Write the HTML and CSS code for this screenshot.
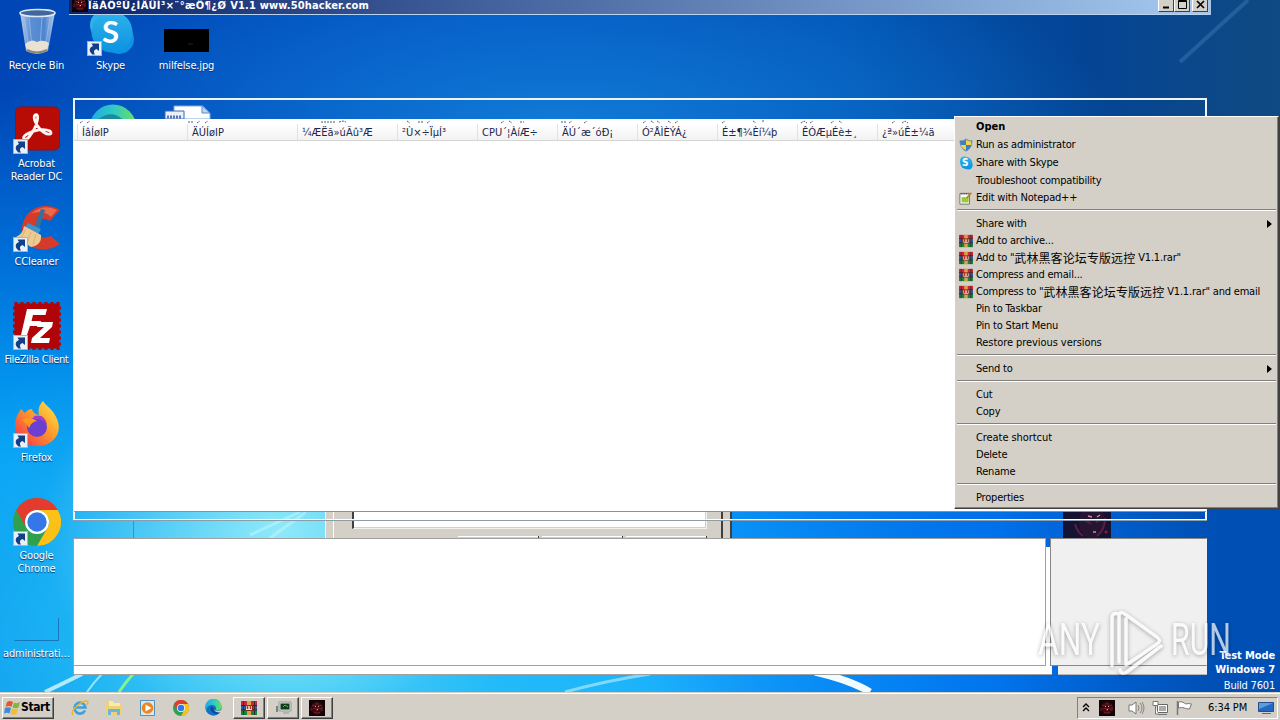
FILE: index.html
```
<!DOCTYPE html>
<html lang="en">
<head>
<meta charset="utf-8">
<title>Desktop</title>
<link rel="stylesheet" href="styles.css">
</head>
<body>
<svg class="defs" width="0" height="0">
  <defs>
    <linearGradient id="fire" x1="1" y1="0" x2="0" y2="1"><stop offset="0" stop-color="#fff04a"/><stop offset=".45" stop-color="#ff9a2a"/><stop offset="1" stop-color="#f5264f"/></linearGradient>
    <linearGradient id="sky" x1="0" y1="0" x2="0" y2="1"><stop offset="0" stop-color="#2fb2ea"/><stop offset="1" stop-color="#0c93e2"/></linearGradient>
    <linearGradient id="edg" x1="0" y1="0" x2="1" y2="0"><stop offset="0" stop-color="#20a8e0"/><stop offset=".5" stop-color="#2fc8c8"/><stop offset="1" stop-color="#6be05a"/></linearGradient>
    <linearGradient id="bin" x1="0" y1="0" x2="1" y2="0"><stop offset="0" stop-color="#b9cfe8"/><stop offset=".3" stop-color="#5c8fd4"/><stop offset=".7" stop-color="#4f86d0"/><stop offset="1" stop-color="#b5cdea"/></linearGradient>
    <symbol id="shortcut" viewBox="0 0 15 15"><rect x=".5" y=".5" width="14" height="14" fill="#e9f1f8" stroke="#a8b4c0"/><path d="M5.500 13.500C1.500 10.500 2 6.500 6 5L4.500 2.500H12V10L9.500 8C6.500 9 6.500 11 8 13.500Z" fill="#123f86"/></symbol>
    <symbol id="rar" viewBox="0 0 16 16"><path fill="#cf2438" d="M0 1h16v5H0z"/><path fill="#2d5dab" d="M0 6h16v4H0z"/><path fill="#16833e" d="M0 10h16v5H0z"/><path d="M0 5.500h16M0 10h16" stroke="#2b1c24"/><path fill="#d6a443" d="M6 1h4v14H6z"/><path d="M2.500 1v14M13.500 1v14" stroke="#3a2b34"/><path fill="#e9e2cf" stroke="#7a2a20" d="M4.500 5.500h7v5h-7z"/><path d="M6.500 5v4M9.500 5v4" stroke="#c22a20" stroke-width="1.500"/></symbol>
    <symbol id="chrome" viewBox="0 0 48 48"><circle cx="24" cy="24" r="24" fill="#2fa14e"/><path d="M3.200 12A24 24 0 0 1 44.800 12H24A12 12 0 0 0 13.600 30Z" fill="#e33b2e"/><path d="M44.800 12A24 24 0 0 1 24 48L34.400 30A12 12 0 0 0 24 12Z" fill="#fbc116"/><circle cx="24" cy="24" r="12" fill="#fff"/><circle cx="24" cy="24" r="9.700" fill="#3477e8"/></symbol>
    <symbol id="edge" viewBox="0 0 48 48"><circle cx="24" cy="24" r="23" fill="#1271c5"/><path d="M1 22A23 23 0 0 1 47 22C47 32 36 35 30 31 34 26 30 17 20 17 11 17 3 24 4 34A23 23 0 0 1 1 22Z" fill="url(#edg)"/><path d="M18 20C12 28 18 41 31 42 37 42 42 38 44 35 37 39 26 36 27 29Z" fill="#0b4a96"/><path d="M27 29Q28 37 47 31L48 36Q37 41 27 34Z" fill="#d4d0c8"/></symbol>
    <symbol id="skull" viewBox="0 0 16 16"><rect width="16" height="16" fill="#100406"/><ellipse cx="8" cy="8" rx="6" ry="6.500" fill="#350b12"/><path d="M3 5l3 1 2-3 2 3 3-1M4 9l3-1 1 3 1-3 3 1M5 12l2 1h3l1-1M2 8v3M13 7v4" fill="none" stroke="#96202a" stroke-width=".8"/><path d="M6 6h1v1H6zM9 6h1v1H9zM8 9h1v1H8z" fill="#d6a4a4"/></symbol>
    <symbol id="skype" viewBox="0 0 48 48"><circle cx="18" cy="17" r="15" fill="#2fb2ea"/><circle cx="32" cy="31" r="15" fill="#0d94e2"/><circle cx="25" cy="24" r="20.500" fill="url(#sky)"/></symbol>
  </defs>
</svg>

<main class="desktop">
  <svg class="wallpaper" width="1280" height="692" viewBox="0 0 1280 692" fill="none">
    <path d="M1180 62L1248 0" stroke="#5f9bd0" stroke-opacity=".28" stroke-width="4"/>
    <path d="M45 692Q62 684 82 674" stroke="#d9f8ff" stroke-width="4" stroke-opacity=".8"/>
    <path d="M87 692Q94 682 102 674" stroke="#c2f2ff" stroke-width="2" stroke-opacity=".75"/>
    <path d="M119 692Q125 683 133 674" stroke="#8cf08a" stroke-width="3"/>
    <path d="M565 692Q605 681 650 674" stroke="#a6eaff" stroke-width="3" stroke-opacity=".7"/>
    <path d="M815 672Q850 680 870 692" stroke="#f2fcff" stroke-width="7"/>
    <path d="M250 535L300 512M270 538L306 512" stroke="#d8fbff" stroke-opacity=".4" stroke-width="3"/>
  </svg>

  <div class="shortcut bin">
    <svg width="48" height="48" viewBox="0 0 48 48"><path d="M7 4L13 43Q24 49 35 43L42 4Z" fill="url(#bin)"/><path d="M11 10L16 40M37 10L32 40M16 8L19 40M29 9L27 38" stroke="#a9c7ec" stroke-opacity=".6"/><path d="M12 36Q18 30 24 34 30 31 36 35L34 43Q24 48 14 43Z" fill="#e9e2d4"/><path d="M14 42Q24 47 34 42" stroke="#8d8576" stroke-width="2" fill="none"/><ellipse cx="24.500" cy="5" rx="17.500" ry="3.500" fill="#41659c" stroke="#dfe8f2" stroke-width="1.600"/></svg>
    <span>Recycle Bin</span>
  </div>
  <div class="shortcut skype">
    <div class="pic"><svg width="48" height="48"><use href="#skype"/></svg><b class="skype-s">S</b><svg class="arrow"><use href="#shortcut"/></svg></div>
    <span>Skype</span>
  </div>
  <div class="shortcut milf">
    <svg width="48" height="48"><rect x="1" y="21" width="45" height="23" fill="#000"/><path d="M25 36h5" stroke="#242424"/></svg>
    <span>milfelse.jpg</span>
  </div>
  <div class="shortcut acrobat">
    <div class="pic"><svg width="48" height="48" viewBox="0 0 48 48"><rect x="2.500" y="1" width="44" height="43" rx="5" fill="#b70b06" stroke="#921111"/><path d="M22 9C27 6 25 20 16 31 12 36 7 32 14 28 21 24 31 22 37 25 41 29 33 30 27 23 22 18 20 11 22 9Z" fill="none" stroke="#fff4ee" stroke-width="2.800"/></svg><svg class="arrow"><use href="#shortcut"/></svg></div>
    <span>Acrobat<br>Reader DC</span>
  </div>
  <div class="shortcut ccleaner">
    <div class="pic"><svg width="48" height="48" viewBox="0 0 48 48"><path d="M47 6L37 17Q24 10 22 24 23 37 38 32L47 40C34 50 9 47 9 24 12 1 35-2 47 6Z" fill="#d53b2b"/><path d="M44 6Q30-1 18 10 29 5 38 13Z" fill="#ec6a4c"/><path d="M28 5L32 6 26 25 21 23Z" fill="#34719f"/><path d="M15 19L28 25 25 30 12 23Z" fill="#3e93cd"/><path d="M11 22L28 31Q29 41 18 43L3 33Q10 30 11 22Z" fill="#edca91"/><path d="M13 25L8 34M18 28L14 40M23 30L20 41" stroke="#c69a5c" stroke-opacity=".5"/></svg><svg class="arrow"><use href="#shortcut"/></svg></div>
    <span>CCleaner</span>
  </div>
  <div class="shortcut filezilla">
    <div class="pic"><svg width="48" height="48" viewBox="0 0 48 48"><rect x="1.500" y="1.500" width="45" height="45" fill="#b00408" stroke="#b00408" stroke-width="3" stroke-dasharray="3 3"/><path d="M14 7H34L32.500 13H20L18.500 19H28L27 24H17L14 33H8Z" fill="#fff"/><path d="M25 20H40L39 25 27 36H37L36 41H18L19 36 31 25H24Z" fill="#fff"/></svg><svg class="arrow"><use href="#shortcut"/></svg></div>
    <span>FileZilla Client</span>
  </div>
  <div class="shortcut firefox">
    <div class="pic"><svg width="48" height="48" viewBox="0 0 48 48"><path d="M30 1C33 6 38 8 42 15 53 33 38 47 24 46 8 46-1 32 3 19 4 14 7 11 8 9L12 13Q15 9 19 9 20 14 26 15 24 7 30 1Z" fill="url(#fire)"/><circle cx="24" cy="27" r="10" fill="#6b3fd0"/><path d="M8 20Q18 16 24 21 18 22 16 28 12 21 8 20Z" fill="#ff981f"/><path d="M21 16Q32 13 34 25 30 18 21 19Z" fill="#a63bc4"/></svg><svg class="arrow"><use href="#shortcut"/></svg></div>
    <span>Firefox</span>
  </div>
  <div class="shortcut gchrome">
    <div class="pic"><svg width="48" height="48"><use href="#chrome"/></svg><svg class="arrow"><use href="#shortcut"/></svg></div>
    <span>Google<br>Chrome</span>
  </div>
  <div class="shortcut admin">
    <svg width="48" height="48"><path d="M1.500 44.500H45.500V22" fill="none" stroke="#1578bd"/></svg>
    <span>administrati…</span>
  </div>
  <div class="stub"></div>

  <section class="titlebar">
    <svg class="app" width="16" height="16"><use href="#skull"/></svg>
    <h1><span class="name">ÎäÁÖºÚ¿ÍÂÛÌ³×¨°æÔ¶¿Ø</span><span>V1.1 www.50hacker.com</span></h1>
    <div class="controls">
      <svg width="16" height="14"><path d="M4 9.500h6" stroke="#000" stroke-width="2"/></svg>
      <svg width="16" height="14"><path d="M3.500 2.500h8v8h-8zM3 3.500h9" fill="none" stroke="#000"/></svg>
      <svg class="close" width="16" height="14"><path d="M4 3l7 7M11 3l-7 7" stroke="#000" stroke-width="1.700"/></svg>
    </div>
  </section>

  <section class="frame">
    <svg width="140" height="20" viewBox="0 0 140 20"><g transform="translate(13 5)"><circle cx="24" cy="24" r="23.500" fill="url(#edg)"/><path d="M7 17Q24 2 38 20Z" fill="#1a8c9c"/></g><path d="M98 7h29l7 7v6H98z" fill="#fff" stroke="#83a9da"/><path d="M126 7v7h8z" fill="#bfd5f0" stroke="#5d8cc8"/><path d="M89 12h19v8H89z" fill="#eaf0fa" stroke="#3d67b0"/><path d="M91 18h15" stroke="#5377b8" stroke-width="3" stroke-dasharray="2 1"/></svg>
  </section>

  <section class="dialog">
    <div class="dialog-inner"><div class="dialog-field"></div><div class="dialog-buttons"><i></i><i></i><i></i></div></div>
  </section>
  <svg class="mask-file" width="48" height="26" viewBox="0 0 48 26"><rect width="48" height="26" fill="#141333"/><ellipse cx="29" cy="10" rx="13" ry="17" fill="#251532"/><path d="M12 12q2 8 8 12M42 6q0 12-8 18M22 8l6 4M33 10l4-2" stroke="#5d1d40" stroke-width="2" fill="none"/><path d="M25 4l4 1M34 5l3-2M30 20h3" stroke="#c58da5" stroke-width="1.500"/><circle cx="43" cy="20" r="1.500" fill="#a2133c"/></svg>
  <div class="frame-bottom"></div>

  <section class="list">
    <svg class="accents" width="880" height="5"><path d="M6 4l3-2m4 2l3-2M114 3h6m3 1l3-2m5 2l3-2M247 3h14m4 0l4-1 3 1M333 2l3 2m8-1h6m3 1l3-2M427 4l3-2m5 0l3 2m8-1h4M487 3h5m3 1l3-2m12 2l3-2M569 4l3-2m5 0l3 2m3-2l3 2m8-2l3 2m4 0l3-2M648 4l3-2m28 0l3 2m6-2h3M727 4l3-2 3 2m3 0l3-2m18 2l3-2m5 0l3 2M818 4l3-2m7 2l3-2 3 2" stroke="#555770" fill="none" stroke-dasharray="2 1"/></svg>
    <div class="columns"><span>ÍâÍøIP</span><span>ÄÚÍøIP</span><span>¼ÆËã»úÃû³Æ</span><span>²Ù×÷ÏµÍ³</span><span>CPU´¦ÀíÆ÷</span><span>ÄÚ´æ´óÐ¡</span><span>Ó²ÅÌÈÝÁ¿</span><span>É±¶¾Èí¼þ</span><span>ÊÓÆµÉè±¸</span><span>¿ª»úÊ±¼ä</span></div>
  </section>
  <section class="log"><div></div></section>
  <section class="preview"></section>
  <section class="preview-foot"></section>

  <div class="build"><b>Test Mode</b><b>Windows 7</b><span>Build 7601</span></div>

  <svg class="watermark" width="210" height="80" viewBox="0 0 210 80">
    <text x="8" y="51" textLength="62" lengthAdjust="spacingAndGlyphs">ANY</text>
    <path d="M89 10Q82 8 82 14V62M89 58V13Q89 6 95 10L127 33Q132 37 127 40L96 61V15M90 66Q91 71 97 68L131 42" />
    <text x="141" y="51" textLength="60" lengthAdjust="spacingAndGlyphs">RUN</text>
  </svg>

  <nav class="menu">
    <div class="item tall strong">Open</div>
    <div class="item tall"><svg viewBox="0 0 16 16"><path d="M8 1Q12 4 15 3 15 12 8 15 1 12 1 3 5 4 8 1Z" fill="#2b78c8" stroke="#8296a5"/><path d="M8 2Q5 4 2 4V8H8ZM8 8h6Q13 12 8 14Z" fill="#3a80cb"/><path d="M8 2Q11 4 14 4V8H8ZM8 8H2Q3 12 8 14Z" fill="#f3d441"/></svg>Run as administrator</div>
    <div class="item tall"><svg viewBox="0 0 48 48"><use href="#skype"/></svg><b class="tiny-s">S</b>Share with Skype</div>
    <div class="item">Troubleshoot compatibility</div>
    <div class="item"><svg viewBox="0 0 16 16"><path d="M1 3h11v12H1z" fill="#fafaf2" stroke="#66705f"/><path d="M3 7h8v6H3z" fill="#9aca39"/><path d="M2 3h9" stroke="#555" stroke-width="2" stroke-dasharray="1 1"/><path d="M9 8l5-6" stroke="#bc7b28" stroke-width="2"/></svg>Edit with Notepad++</div>
    <hr>
    <div class="item more">Share with</div>
    <div class="item"><svg><use href="#rar"/></svg>Add to archive...</div>
    <div class="item"><svg><use href="#rar"/></svg><span>Add to "<span class="cn">武林黑客论坛专版远控</span> V1.1.rar"</span></div>
    <div class="item"><svg><use href="#rar"/></svg>Compress and email...</div>
    <div class="item"><svg><use href="#rar"/></svg><span>Compress to "<span class="cn">武林黑客论坛专版远控</span> V1.1.rar" and email</span></div>
    <div class="item">Pin to Taskbar</div>
    <div class="item">Pin to Start Menu</div>
    <div class="item wide">Restore previous versions</div>
    <hr>
    <div class="item more">Send to</div>
    <hr>
    <div class="item">Cut</div>
    <div class="item">Copy</div>
    <hr>
    <div class="item wide">Create shortcut</div>
    <div class="item">Delete</div>
    <div class="item">Rename</div>
    <hr>
    <div class="item">Properties</div>
  </nav>
</main>

<footer class="taskbar">
  <div class="start"><svg width="17" height="16" viewBox="0 0 17 16"><path d="M3 2Q6 0 9 2L7.500 7Q5 5 1.500 7Z" fill="#e5582b"/><path d="M10 2.500Q13 4 16 2L14.500 7.500Q12 9 8.500 7.500Z" fill="#7fb83a"/><path d="M1 8Q4 6.500 7 8L5.500 13.500Q3 12 0 13.500Z" fill="#3c8cd8"/><path d="M8 8.500Q11 10 14 8.500L12.500 14Q10 15.500 6.500 14Z" fill="#f3bd2c"/></svg><b>Start</b></div>
  <div class="quick">
    <svg width="18" height="18" viewBox="0 0 18 18"><path d="M14 11.500A5.500 5.500 0 1 1 14.500 8.500H5" fill="none" stroke="#3d9fdf" stroke-width="2.600"/><path d="M2 16Q-1 13 7 6 15 0 17 3 17 4 16 6" fill="none" stroke="#e3b92c" stroke-width="1.500"/></svg>
    <svg width="18" height="18" viewBox="0 0 18 18"><path d="M1 3h5l1 2h9v11H1z" fill="#edd277"/><path d="M4 2h4l1 2h6v3H4z" fill="#f8ecad"/><path d="M3 16v-6h12v6h-3v-3H6v3z" fill="#6db5de"/></svg>
    <svg width="18" height="18" viewBox="0 0 18 18"><path d="M1.500 1.500h14v15h-14z" fill="#d4e9f6" stroke="#5491bd"/><circle cx="8.500" cy="9" r="5.800" fill="#ef8519"/><path d="M6.500 5.500l6 3.500-6 3.500z" fill="#fff"/></svg>
    <svg width="16" height="16"><use href="#chrome"/></svg>
    <svg width="17" height="17"><use href="#edge"/></svg>
  </div>
  <div class="tasks">
    <div><svg width="16" height="16"><use href="#rar"/></svg></div>
    <div><svg width="18" height="16" viewBox="0 0 18 16"><path d="M5 2h12v9H5z" fill="#dce0db" stroke="#999"/><path d="M6.500 3.500h9v6h-9z" fill="#123d1b"/><path d="M9 7l2-2 3 2" stroke="#4bb651" fill="none"/><path d="M9 13h6" stroke="#8e9b8d"/><path d="M2 6h2v6H2z" fill="#76867a"/></svg></div>
    <div><svg width="16" height="16"><use href="#skull"/></svg></div>
  </div>
  <div class="tray">
    <svg width="8" height="10"><path d="M1 4l3-3 3 3M1 8l3-3 3 3" fill="none" stroke="#000" stroke-width="1.300"/></svg>
    <svg width="16" height="16"><use href="#skull"/></svg>
    <svg width="17" height="16" viewBox="0 0 17 16"><path d="M1 5h3l4-3v12l-4-3H1z" fill="#fff" stroke="#777"/><path d="M10 5q2 3 0 6M12 3q4 5 0 10M14 2q4 6 0 12" fill="none" stroke="#85857f"/></svg>
    <svg width="16" height="16" viewBox="0 0 16 16"><path d="M5.500 4.500h10v8h-10z" fill="#fff" stroke="#666"/><path d="M7 6h7v5H7z" fill="#aaa"/><path d="M6 14.500h9" stroke="#777"/><path d="M1 1.500h5v4H1zM3.500 5v9H6" fill="#fff" stroke="#777"/></svg>
    <svg width="17" height="16" viewBox="0 0 17 16"><path d="M1.500 1v14" stroke="#777" stroke-width="1.500"/><path d="M2.500 2q3-1 6 1l1 1q3-1 6 0l-2 5q-3 0-5-1-3-1-6 0z" fill="#fff" stroke="#777"/></svg>
    <time>6:34 PM</time>
    <svg width="16" height="14" viewBox="0 0 16 14"><path d="M.500 1.500h15v9H.500z" fill="#2469c1" stroke="#254e8e"/><path d="M1 2h14L1 8z" fill="#5c9ddd"/><path d="M4 12.500h9" stroke="#456ea5"/></svg>
  </div>
</footer>
</body>
</html>
```

FILE: styles.css
```
* { box-sizing: border-box; }
body {
  margin: 0; width: 1280px; height: 720px; overflow: hidden;
  display: flex; flex-direction: column;
  font: 11px/13px "DejaVu Sans Condensed", "DejaVu Sans", sans-serif;
  font-stretch: condensed; letter-spacing: -0.2px; color: #000;
}
svg { display: block; flex: none; }
.defs { position: absolute; }
.desktop {
  position: relative; height: 692px; overflow: hidden;
  background:
    radial-gradient(ellipse 240px 190px at 280px 530px, rgba(160, 242, 250, .85), transparent),
    radial-gradient(ellipse 480px 330px at 290px 650px, rgba(110, 225, 244, .8), rgba(50, 200, 245, .5) 45%, transparent),
    radial-gradient(ellipse 600px 360px at 150px 640px, rgba(10, 180, 250, .7), transparent),
    radial-gradient(ellipse 820px 560px at 590px 720px, #1cb0ff 0, #0a98f8 40%, rgba(0, 125, 235, .7) 65%, transparent),
    radial-gradient(ellipse 480px 380px at 0 470px, #00a4f8, rgba(0, 140, 240, .6) 55%, transparent),
    radial-gradient(ellipse 560px 200px at 560px 130px, rgba(18, 125, 216, .95), transparent),
    linear-gradient(90deg, #0046b6 0, #0050c0 35%, #0052b4 65%, #044494 85%, #104a82 100%);
}
.desktop::before {
  content: ""; position: absolute; inset: 420px 0 0 650px;
  background: linear-gradient(90deg, transparent, rgba(0, 112, 238, .8) 55%, #004fb4 90%);
}
.wallpaper { position: absolute; }

.shortcut {
  position: absolute; left: 0; width: 74px; display: flex; flex-direction: column; align-items: center; gap: 3px;
  color: #fff; text-align: center; text-shadow: 0 1px 1px #00316e; letter-spacing: -0.15px; white-space: nowrap;
  padding-right: 1px;
}
.shortcut .pic { position: relative; }
.arrow { position: absolute; left: 0; bottom: 0; width: 15px; height: 15px; }
.bin { top: 8px; }
.skype { top: 8px; left: 74px; }
.milf { top: 8px; left: 150px; }
.acrobat { top: 106px; }
.ccleaner { top: 204px; }
.filezilla { top: 302px; letter-spacing: -0.35px; }
.firefox { top: 400px; }
.gchrome { top: 498px; }
.admin { top: 596px; letter-spacing: -0.2px; }
.skype-s { position: absolute; inset: 6px 0 auto; font: bold 31px/34px Lato, sans-serif; text-shadow: none; }
.stub { position: absolute; left: 133px; top: 520px; width: 1px; height: 18px; background: #3f93b8; }

.titlebar {
  position: absolute; left: 69px; top: 0; width: 1142px; height: 15px; display: flex;
  border-right: 2px solid #aac4e4; border-bottom: 1px solid #b8d4f0; background: linear-gradient(90deg, #0a246a, #a6caf0);
}
.app { margin: -4px 0 0 3px; }
.titlebar h1 { margin: -1px 0 0; font: bold 11px/13px "DejaVu Sans Condensed", "DejaVu Sans", sans-serif; color: #fff; letter-spacing: 0.15px; white-space: nowrap; display: flex; gap: 4px; }
.titlebar .name { letter-spacing: 0.4px; }
.controls { margin-left: auto; display: flex; margin-top: -2px; }
.controls svg { background: #d4d0c8; border: solid; border-width: 0 1px 1px; border-color: #fff #404040 #404040 #fff; }
.controls .close { margin-left: 2px; margin-right: 1px; }

.frame { position: absolute; left: 73px; top: 98px; width: 1134px; height: 423px; border: 2px solid #edf3fa; border-bottom: 0; }
.frame svg { margin-top: -1px; margin-left: 1px; }
.frame-bottom { position: absolute; left: 73px; top: 519px; width: 1134px; height: 2px; background: #fff; border-bottom: 1px solid #8e9ca8; }
.list { position: absolute; left: 74px; top: 119px; width: 1132px; height: 393px; background: #fff; border-bottom: 1px solid #909090; }
.columns {
  display: grid; grid-template-columns: 110px 110px 100px repeat(7, 80px); height: 17px; padding-left: 3px;
  background: linear-gradient(#fff, #f2f2f3); border-bottom: 1px solid #d5d5d5; color: #20264c; line-height: 18px; white-space: nowrap;
}
.columns span { border-left: 1px solid #e0e2e6; padding-left: 4px; overflow: hidden; letter-spacing: 0; }
.log { position: absolute; left: 73px; top: 538px; width: 979px; height: 137px; border-bottom: 1px solid #a0a0a0; background: linear-gradient(#fff, #fff) 0 9px no-repeat; border-left: 1px solid #a0a0a0; }
.log div { width: 972px; height: 128px; background: #fff; border: 1px solid #a0a0a0; border-left: 0; }
.preview { position: absolute; left: 1050px; top: 538px; width: 157px; height: 128px; background: #f0f0f0; border: 1px solid #888; border-right-color: #f0f0f0; }
.preview-foot { position: absolute; left: 1058px; top: 666px; width: 149px; height: 9px; background: #f0f0f0; border-bottom: 1px solid #b8b8b8; }

.dialog { position: absolute; left: 325px; top: 512px; width: 407px; height: 26px; background: #d4d0c8; border: solid; border-width: 0 2px 0 1px; border-color: #fff #404040 #404040 #fff; padding: 0 7px; }
.dialog-inner { height: 26px; border: solid; border-width: 0 2px 0 1px; border-color: #fff #404040 #404040 #fff; padding-left: 18px; display: flex; flex-direction: column; justify-content: space-between; }
.dialog-field { width: 355px; height: 17px; border: 1px solid #f4f2ee; border-left: 2px solid #404040; border-top: 0; background: #fff; box-shadow: inset -1px -1px #d4d0c8; }
.dialog-buttons { display: flex; gap: 3px; padding-left: 106px; }
.dialog-buttons i { width: 81px; height: 2px; background: linear-gradient(#fff 50%, #d4d0c8 50%); border-right: 1px solid #404040; }
.mask-file { position: absolute; left: 1063px; top: 512px; }

.build { position: absolute; right: 5px; top: 649px; color: #fff; display: flex; flex-direction: column; align-items: flex-end; gap: 1px; }
.build b { letter-spacing: -0.1px; }
.build span { margin-top: 2px; }
.watermark { position: absolute; left: 1030px; top: 604px; filter: drop-shadow(0 1px 2px rgba(0, 0, 0, .45)); opacity: .7; }
.watermark text { font: 400 44px Roboto, sans-serif; fill: #fff; letter-spacing: 0; }
.watermark path { fill: none; stroke: #fff; stroke-width: 3.5; stroke-linejoin: round; stroke-linecap: round; }

.menu {
  position: absolute; left: 954px; top: 116px; width: 325px; height: 393px; background: #d4d0c8; padding: 1px 2px;
  border: 1px solid; border-color: #fff #404040 #404040 #fff; box-shadow: inset -1px -1px #808080;
}
.item { position: relative; height: 17px; line-height: 17px; padding-left: 19px; white-space: nowrap; display: flex; align-items: center; }
.item.tall { height: 18px; line-height: 18px; }
.item.strong { font-weight: bold; letter-spacing: 0; }
.item.wide { letter-spacing: -0.07px; }
.item > svg { width: 14px; height: 14px; margin-left: -17px; margin-right: 3px; }
.cn { display: inline-block; height: 15px; vertical-align: top; font-family: "Noto Sans CJK SC", sans-serif; font-size: 12px; letter-spacing: 0.1px; line-height: 18px; }
.tiny-s { position: absolute; left: 5px; color: #fff; font-size: 10px; }
.more::after { content: ""; margin-left: auto; margin-right: 4px; border: 4px solid transparent; border-left: 5px solid #000; border-right: 0; }
.menu hr { height: 2px; margin: 3px 0 4px; border: 0; border-top: 1px solid #808080; border-bottom: 1px solid #fff; }

.taskbar { height: 28px; background: #d4d0c8; border-top: 1px solid #d4d0c8; box-shadow: inset 0 1px #fff; display: flex; align-items: center; padding: 2px 2px 0; }
.start { width: 52px; height: 22px; display: flex; align-items: center; padding-left: 1px; gap: 0; }
.start b { font-size: 12px; letter-spacing: -0.4px; }
.start, .tasks div { border: 1px solid; border-color: #fff #404040 #404040 #fff; box-shadow: inset -1px -1px #808080; }
.quick { display: flex; gap: 16px; align-items: center; margin-left: 17px; }
.tasks { display: flex; gap: 2px; margin-left: 11px; }
.tasks div { width: 32px; height: 22px; display: grid; place-items: center; }
.tray { margin-left: auto; width: 201px; height: 22px; border: 1px solid; border-color: #808080 #fff #fff #808080; display: flex; align-items: center; gap: 9px; padding: 0 0 0 4px; }
.tray svg:nth-child(2) { margin-right: 4px; }
.tray svg:nth-child(3) { margin-right: -2px; }
.tray svg:nth-child(4) { margin-right: -1px; }
.tray time { margin-left: 6px; letter-spacing: -0.1px; white-space: nowrap; }
.tray svg:last-child { margin-left: 2px; }
```
